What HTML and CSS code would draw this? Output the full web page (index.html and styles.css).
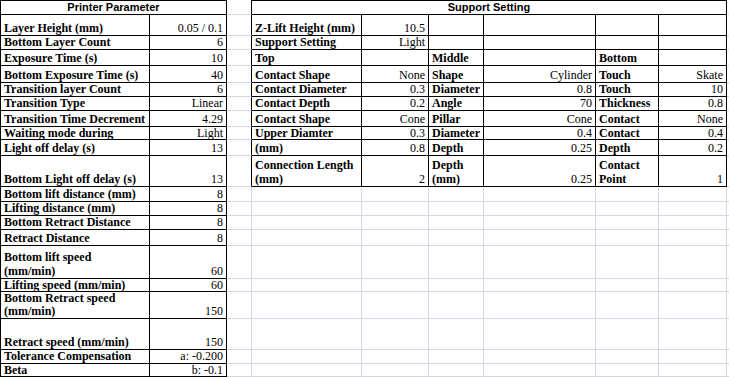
FILE: index.html
```html
<!DOCTYPE html>
<html lang="en">
<head>
<meta charset="utf-8">
<title>Printer Parameter / Support Setting</title>
<link rel="stylesheet" href="styles.css">
</head>
<body>
<div class="sheet">
  <!-- row 1 -->
  <div class="c k h span2">Printer Parameter</div>
  <div class="c cb"></div>
  <div class="c k h span6">Support Setting</div>
  <div class="c"></div>
  <!-- row 2 -->
  <div class="c k">Layer Height (mm)</div>
  <div class="c k n">0.05 / 0.1</div>
  <div class="c cb"></div>
  <div class="c k">Z-Lift Height (mm)</div>
  <div class="c k n">10.5</div>
  <div class="c k"></div><div class="c k"></div><div class="c k"></div><div class="c k"></div>
  <div class="c"></div>
  <!-- row 3 -->
  <div class="c k">Bottom Layer Count</div>
  <div class="c k n">6</div>
  <div class="c cb"></div>
  <div class="c k">Support Setting</div>
  <div class="c k n">Light</div>
  <div class="c k"></div><div class="c k"></div><div class="c k"></div><div class="c k"></div>
  <div class="c"></div>
  <!-- row 4 -->
  <div class="c k">Exposure Time (s)</div>
  <div class="c k n">10</div>
  <div class="c cb"></div>
  <div class="c k">Top</div>
  <div class="c k n"></div>
  <div class="c k">Middle</div>
  <div class="c k n"></div>
  <div class="c k">Bottom</div>
  <div class="c k n"></div>
  <div class="c"></div>
  <!-- row 5 -->
  <div class="c k">Bottom Exposure Time (s)</div>
  <div class="c k n">40</div>
  <div class="c cb"></div>
  <div class="c k">Contact Shape</div>
  <div class="c k n">None</div>
  <div class="c k">Shape</div>
  <div class="c k n">Cylinder</div>
  <div class="c k">Touch</div>
  <div class="c k n">Skate</div>
  <div class="c"></div>
  <!-- row 6 -->
  <div class="c k">Transition layer Count</div>
  <div class="c k n">6</div>
  <div class="c cb"></div>
  <div class="c k">Contact Diameter</div>
  <div class="c k n">0.3</div>
  <div class="c k">Diameter</div>
  <div class="c k n">0.8</div>
  <div class="c k">Touch</div>
  <div class="c k n">10</div>
  <div class="c"></div>
  <!-- row 7 -->
  <div class="c k">Transition Type</div>
  <div class="c k n">Linear</div>
  <div class="c cb"></div>
  <div class="c k">Contact Depth</div>
  <div class="c k n">0.2</div>
  <div class="c k">Angle</div>
  <div class="c k n">70</div>
  <div class="c k">Thickness</div>
  <div class="c k n">0.8</div>
  <div class="c"></div>
  <!-- row 8 -->
  <div class="c k">Transition Time Decrement</div>
  <div class="c k n">4.29</div>
  <div class="c cb"></div>
  <div class="c k">Contact Shape</div>
  <div class="c k n">Cone</div>
  <div class="c k">Pillar</div>
  <div class="c k n">Cone</div>
  <div class="c k">Contact</div>
  <div class="c k n">None</div>
  <div class="c"></div>
  <!-- row 9 -->
  <div class="c k t">Waiting mode during</div>
  <div class="c k n t">Light</div>
  <div class="c cb"></div>
  <div class="c k t">Upper Diamter</div>
  <div class="c k n t">0.3</div>
  <div class="c k t">Diameter</div>
  <div class="c k n t">0.4</div>
  <div class="c k t">Contact</div>
  <div class="c k n t">0.4</div>
  <div class="c"></div>
  <!-- row 10 -->
  <div class="c k">Light off delay (s)</div>
  <div class="c k n">13</div>
  <div class="c cb"></div>
  <div class="c k">(mm)</div>
  <div class="c k n">0.8</div>
  <div class="c k">Depth</div>
  <div class="c k n">0.25</div>
  <div class="c k">Depth</div>
  <div class="c k n">0.2</div>
  <div class="c"></div>
  <!-- row 11 -->
  <div class="c k">Bottom Light off delay (s)</div>
  <div class="c k n">13</div>
  <div class="c cb"></div>
  <div class="c k">Connection Length<br>(mm)</div>
  <div class="c k n">2</div>
  <div class="c k">Depth<br>(mm)</div>
  <div class="c k n">0.25</div>
  <div class="c k">Contact<br>Point</div>
  <div class="c k n">1</div>
  <div class="c"></div>
  <!-- row 12 -->
  <div class="c k">Bottom lift distance (mm)</div>
  <div class="c k n">8</div>
  <div class="c"></div><div class="c"></div><div class="c"></div><div class="c"></div><div class="c"></div><div class="c"></div><div class="c"></div><div class="c"></div>
  <!-- row 13 -->
  <div class="c k">Lifting distance (mm)</div>
  <div class="c k n">8</div>
  <div class="c"></div><div class="c"></div><div class="c"></div><div class="c"></div><div class="c"></div><div class="c"></div><div class="c"></div><div class="c"></div>
  <!-- row 14 -->
  <div class="c k">Bottom Retract Distance</div>
  <div class="c k n">8</div>
  <div class="c"></div><div class="c"></div><div class="c"></div><div class="c"></div><div class="c"></div><div class="c"></div><div class="c"></div><div class="c"></div>
  <!-- row 15 -->
  <div class="c k">Retract Distance</div>
  <div class="c k n">8</div>
  <div class="c"></div><div class="c"></div><div class="c"></div><div class="c"></div><div class="c"></div><div class="c"></div><div class="c"></div><div class="c"></div>
  <!-- row 16 -->
  <div class="c k">Bottom lift speed<br>(mm/min)</div>
  <div class="c k n">60</div>
  <div class="c"></div><div class="c"></div><div class="c"></div><div class="c"></div><div class="c"></div><div class="c"></div><div class="c"></div><div class="c"></div>
  <!-- row 17 -->
  <div class="c k t">Lifting speed (mm/min)</div>
  <div class="c k n t">60</div>
  <div class="c"></div><div class="c"></div><div class="c"></div><div class="c"></div><div class="c"></div><div class="c"></div><div class="c"></div><div class="c"></div>
  <!-- row 18 -->
  <div class="c k t13">Bottom Retract speed<br>(mm/min)</div>
  <div class="c k n">150</div>
  <div class="c"></div><div class="c"></div><div class="c"></div><div class="c"></div><div class="c"></div><div class="c"></div><div class="c"></div><div class="c"></div>
  <!-- row 19 -->
  <div class="c k">Retract speed (mm/min)</div>
  <div class="c k n">150</div>
  <div class="c"></div><div class="c"></div><div class="c"></div><div class="c"></div><div class="c"></div><div class="c"></div><div class="c"></div><div class="c"></div>
  <!-- row 20 -->
  <div class="c k">Tolerance Compensation</div>
  <div class="c k n">a: -0.200</div>
  <div class="c"></div><div class="c"></div><div class="c"></div><div class="c"></div><div class="c"></div><div class="c"></div><div class="c"></div><div class="c"></div>
  <!-- row 21 -->
  <div class="c k t">Beta</div>
  <div class="c k n t">b: -0.1</div>
  <div class="c"></div><div class="c"></div><div class="c"></div><div class="c"></div><div class="c"></div><div class="c"></div><div class="c"></div><div class="c"></div>
</div>
</body>
</html>
```
FILE: styles.css
```css
html, body {
  margin: 0;
  padding: 0;
  background: #ffffff;
}

.sheet {
  display: grid;
  grid-template-columns: 149px 77px 25px 110px 67px 55px 112px 63px 68px 1fr;
  grid-template-rows: 15px 21px 14px 16px 17px 14px 14px 16px 13px 16px 31px 15px 14px 14px 16px 33px 13px 27px 31px 14px 13px;
  width: 729px;
  height: 377px;
  border-left: 1px solid #000;
  box-sizing: border-box;
  font-family: "Liberation Serif", "Times New Roman", serif;
  font-size: 12px;
  line-height: 14px;
  color: #000;
}

.c {
  box-sizing: border-box;
  min-width: 0;
  overflow: hidden;
  white-space: nowrap;
  display: flex;
  flex-direction: column;
  justify-content: flex-end;
  padding: 0 3px;
  font-weight: bold;
  border-right: 1px solid #d0d7e5;
  border-bottom: 1px solid #d0d7e5;
}

.k {
  border-right-color: #000;
  border-bottom-color: #000;
}

.cb {
  border-right-color: #000;
}

.n {
  font-weight: normal;
  text-align: right;
}

.t {
  line-height: 12px;
}

.t13 {
  line-height: 13px;
}

.h {
  border-top: 1px solid #000;
  font-family: "Liberation Sans", Arial, sans-serif;
  font-size: 11px;
  line-height: 13px;
  text-align: center;
}

.span2 {
  grid-column: span 2;
}

.span6 {
  grid-column: span 6;
}
```
